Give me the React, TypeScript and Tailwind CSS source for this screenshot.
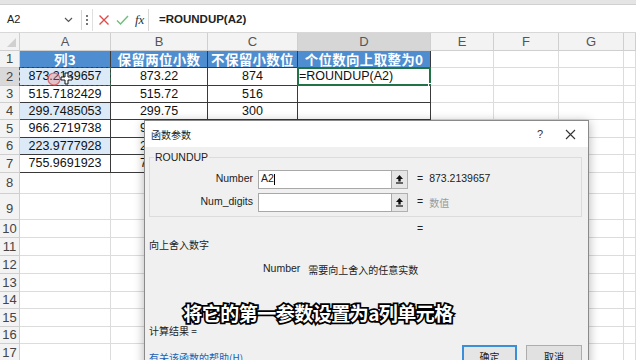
import React from "react";

const colW = ["w-[91px]", "w-[97px]", "w-[90px]", "w-[133px]", "w-[63px]", "w-[65px]", "w-[65px]", "flex-1"];
const rowH: Record<number, string> = {
  1: "h-[17px]", 2: "h-[18px]", 3: "h-[17px]", 4: "h-[17px]", 5: "h-[18px]", 6: "h-[17px]", 7: "h-[18px]",
  8: "h-[21px]", 9: "h-[26px]", 10: "h-[18px]", 11: "h-[18px]", 12: "h-[18px]", 13: "h-[18px]",
  14: "h-[17px]", 15: "h-[18px]", 16: "h-[17px]", 17: "h-[18px]",
};

const data: string[][] = [
  ["873.2139657", "873.22", "874"],
  ["515.7182429", "515.72", "516"],
  ["299.7485053", "299.75", "300"],
  ["966.2719738", "966.27", "967"],
  ["223.9777928", "223.98", "224"],
  ["755.9691923", "755.97", "756"],
];
const heads = ["列3", "保留两位小数", "不保留小数位", "个位数向上取整为0"];

const UpArrow = () => (
  <svg width="9" height="10" viewBox="0 0 9 10">
    <path d="M4.5 1 L8 5 H5.7 V7.5 H3.3 V5 H1 Z" fill="#111" />
    <rect x="1" y="8.4" width="7" height="1.2" fill="#111" />
  </svg>
);

function Row({ n }: { n: number }) {
  const inTable = n >= 1 && n <= 7;
  const cells = [];
  for (let c = 0; c < 8; c++) {
    const tbl = inTable && c < 4;
    let bg = "bg-white";
    let content: React.ReactNode = null;
    let extra = "";
    if (n === 1 && c < 4) {
      bg = "bg-[#4d8dd0]";
      content = heads[c];
      extra = "text-white font-semibold text-[13.5px] justify-center [font-family:'Noto_Sans_CJK_SC',sans-serif] tracking-[0.3px]";
    } else if (inTable && c < 3) {
      const v = data[n - 2][c];
      content = v;
      if (c === 0 && n % 2 === 0) bg = "bg-[#dceaf7]";
      extra = "justify-center text-[12.5px] text-[#111]";
    }
    const border = tbl ? "border-[#3a3a3a]" : "border-[#dcdcdc]";
    cells.push(
      <div
        key={c}
        className={`${colW[c]} ${bg} ${border} border-r border-b relative flex items-center shrink-0 overflow-visible whitespace-nowrap ${extra}`}
      >
        {content}
        {n === 2 && c === 0 && (
          <div className="absolute inset-[-1px] border-[1.5px] border-dashed border-[#2e6b4c] pointer-events-none" />
        )}
        {n === 2 && c === 0 && (
          <svg className="absolute left-[26px] top-[2px]" width="30" height="16" viewBox="0 0 30 16">
            <circle cx="8" cy="9" r="6" fill="rgba(235,120,120,0.35)" stroke="rgba(220,80,80,0.8)" strokeWidth="1.2" />
            <path d="M19 3 h3 v4 h4 v3 h-4 v4 h-3 v-4 h-4 v-3 h4 z" fill="#fff" stroke="#111" strokeWidth="1" />
          </svg>
        )}
        {n === 2 && c === 3 && (
          <>
            <span className="pl-[1px] text-[12.5px] text-[#111]">=ROUNDUP(A2)</span>
            <div className="absolute inset-[-1px] border-2 border-[#217346] pointer-events-none" />
            <div className="absolute right-[-3px] bottom-[-3px] w-[5px] h-[5px] bg-[#217346] border border-white" />
          </>
        )}
      </div>
    );
  }
  return (
    <div className={`flex ${rowH[n]}`}>
      <div
        className={`w-[20px] shrink-0 border-r border-b border-[#cfcfcf] flex justify-center text-[13px] text-[#444] ${
          n === 9 ? "items-end pb-[1px]" : "items-center"
        } ${n === 2 ? "bg-[#d9d9d9]" : "bg-[#f3f3f3]"}`}
      >
        {n}
      </div>
      {cells}
    </div>
  );
}

export default function App() {
  const rows = Array.from({ length: 17 }, (_, i) => i + 1);
  return (
    <div className="w-[636px] h-[360px] overflow-hidden relative bg-white [font-family:'Liberation_Sans','Noto_Sans_CJK_SC',sans-serif]">
      {/* top strip */}
      <div className="h-[5px] bg-[#e4e4e4] border-b border-[#d0d0d0]" />
      {/* formula bar */}
      <div className="h-[28px] bg-white flex items-center border-b border-[#d8d8d8] pt-[2px]">
        <div className="w-[82px] h-[20px] flex items-center justify-between pl-[7px] pr-[8px] border-r border-[#d8d8d8]">
          <span className="text-[11px] text-[#222]">A2</span>
          <svg width="9" height="6" viewBox="0 0 9 6">
            <path d="M1 1 L4.5 4.5 L8 1" fill="none" stroke="#555" strokeWidth="1.2" />
          </svg>
        </div>
        <div className="w-[10px] flex flex-col items-center gap-[2px]">
          <div className="w-[2px] h-[2px] bg-[#777]" />
          <div className="w-[2px] h-[2px] bg-[#777]" />
          <div className="w-[2px] h-[2px] bg-[#777]" />
        </div>
        <div className="w-[56px] h-[22px] flex items-center gap-[6px] pl-[5px] border-l border-[#e0e0e0]">
          <svg width="12" height="12" viewBox="0 0 12 12">
            <path d="M1.5 1.5 L10.5 10.5 M10.5 1.5 L1.5 10.5" stroke="#e04a4a" strokeWidth="1.4" />
          </svg>
          <svg width="13" height="12" viewBox="0 0 13 12">
            <path d="M1 6.5 L4.5 10 L12 2" fill="none" stroke="#6fbf7a" strokeWidth="1.4" />
          </svg>
          <span className="text-[13px] italic text-[#333] [font-family:'Liberation_Serif',serif]">fx</span>
        </div>
        <div className="flex-1 h-[22px] flex items-center pl-[10px] border-l border-[#d8d8d8]">
          <span className="text-[11.5px] font-semibold text-[#222]">=ROUNDUP(A2)</span>
        </div>
      </div>
      {/* column headers */}
      <div className="flex h-[18px] bg-[#f3f3f3]">
        <div className="w-[20px] shrink-0 border-r border-b border-[#cfcfcf] relative">
          <div className="absolute right-[3px] bottom-[3px] w-0 h-0 border-l-[9px] border-l-transparent border-b-[9px] border-b-[#d0d0d0]" />
        </div>
        {["A", "B", "C", "D", "E", "F", "G", ""].map((l, i) => (
          <div
            key={i}
            className={`${colW[i]} shrink-0 border-r border-b border-[#cfcfcf] flex items-center justify-center text-[13px] text-[#555] ${
              l === "D" ? "bg-[#d6d6d6]" : ""
            }`}
          >
            {l}
          </div>
        ))}
      </div>
      {rows.map((n) => (
        <Row key={n} n={n} />
      ))}

      {/* dialog */}
      <div className="absolute left-[144px] top-[120px] w-[445px] h-[250px] bg-[#f0f0f0] border border-[#8a8a8a] shadow-[0_2px_10px_rgba(0,0,0,0.3)] text-[10px] text-[#222]">
        <div className="h-[26px] bg-white flex items-center justify-between pl-[6px] pr-[12px]">
          <span className="text-[10px] [font-family:'Noto_Sans_CJK_SC',sans-serif]">函数参数</span>
          <div className="flex items-center gap-[22px]">
            <span className="text-[11px] text-[#333]">?</span>
            <svg width="11" height="11" viewBox="0 0 11 11">
              <path d="M1 1 L10 10 M10 1 L1 10" stroke="#333" strokeWidth="1.1" />
            </svg>
          </div>
        </div>
        <div className="px-[4px]">
          <fieldset className="border border-[#dcdcdc] ml-0 mr-[2px] mt-[3px] h-[67px] px-[4px] pt-[4px]">
            <legend className="px-[1px] text-[10.5px] ml-[0px]">ROUNDUP</legend>
            <div className="flex items-center h-[19px]">
              <div className="w-[104px] text-right pr-[5px] text-[10.5px]">Number</div>
              <div className="w-[134px] h-[19px] bg-white border border-[#a8a8a8] flex items-center pl-[2px] text-[10.5px]">
                A2<span className="w-[1px] h-[11px] bg-black" />
              </div>
              <div className="w-[16px] h-[19px] bg-[#e6e6e6] border border-[#b0b0b0] border-l-0 flex items-center justify-center">
                <UpArrow />
              </div>
              <span className="ml-[9px] text-[10.5px]">=</span>
              <span className="ml-[6px] text-[10.5px]">873.2139657</span>
            </div>
            <div className="flex items-center h-[19px] mt-[4px]">
              <div className="w-[104px] text-right pr-[5px] text-[10.5px]">Num_digits</div>
              <div className="w-[134px] h-[19px] bg-white border border-[#a8a8a8]" />
              <div className="w-[16px] h-[19px] bg-[#e6e6e6] border border-[#b0b0b0] border-l-0 flex items-center justify-center">
                <UpArrow />
              </div>
              <span className="ml-[9px] text-[10.5px]">=</span>
              <span className="ml-[6px] text-[10px] text-[#9a9a9a] [font-family:'Noto_Sans_CJK_SC',sans-serif]">数值</span>
            </div>
          </fieldset>
          <div className="pl-[268px] mt-[4px] h-[14px] text-[10.5px]">=</div>
          <div className="mt-[2px] h-[14px] [font-family:'Noto_Sans_CJK_SC',sans-serif]">向上舍入数字</div>
          <div className="pl-[114px] mt-[11px] h-[14px] flex items-center gap-[8px]">
            <span className="text-[10.5px]">Number</span>
            <span className="[font-family:'Noto_Sans_CJK_SC',sans-serif]">需要向上舍入的任意实数</span>
          </div>
          <div className="mt-[47px] h-[14px] [font-family:'Noto_Sans_CJK_SC',sans-serif]">计算结果 =</div>
          <div className="flex items-start justify-between mt-[4px]">
            <span className="mt-[9px] text-[#1a5fb4] underline [font-family:'Noto_Sans_CJK_SC',sans-serif]">有关该函数的帮助(H)</span>
            <div className="flex gap-[9px] mr-[2px] mt-[4px]">
              <div className="w-[55px] h-[22px] bg-[#e5e5e5] border-2 border-[#3b8fd9] flex items-center justify-center [font-family:'Noto_Sans_CJK_SC',sans-serif]">
                确定
              </div>
              <div className="w-[56px] h-[22px] bg-[#e1e1e1] border border-[#adadad] flex items-center justify-center [font-family:'Noto_Sans_CJK_SC',sans-serif]">
                取消
              </div>
            </div>
          </div>
        </div>
      </div>

      {/* subtitle caption */}
      <div className="absolute left-0 right-0 top-[299px] text-center text-[19px] font-bold text-white [font-family:'Noto_Sans_CJK_SC',sans-serif] [-webkit-text-stroke:3.5px_#000] [paint-order:stroke_fill] tracking-[-0.5px]">
        将它的第一参数设置为a列单元格
      </div>
    </div>
  );
}
